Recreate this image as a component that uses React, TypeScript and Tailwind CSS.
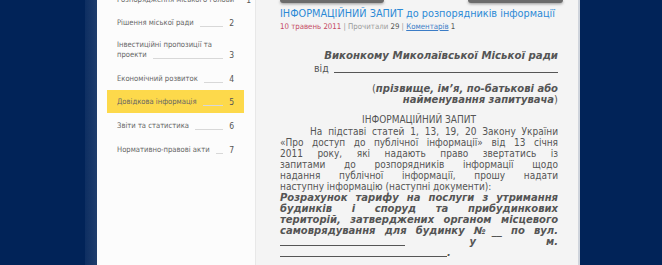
import React from 'react';

const navItems = [
  { label: 'Розпорядження міського голови', num: 1 },
  { label: 'Рішення міської ради', num: 2 },
  { label: 'Інвестиційні пропозиції та проекти', num: 3, two: true },
  { label: 'Економічний розвиток', num: 4 },
  { label: 'Довідкова інформація', num: 5, active: true },
  { label: 'Звіти та статистика', num: 6 },
  { label: 'Нормативно-правові акти', num: 7 },
];

const bodyLines = [
  '«Про доступ до публічної інформації» від 13 січня',
  '2011 року, які надають право звертатись із',
  'запитами до розпорядників інформації щодо',
  'надання публічної інформації, прошу надати',
];

const boldLines = [
  'Розрахунок тарифу на послуги з утримання',
  'будинків і споруд та прибудинкових',
  'територій, затверджених органом місцевого',
  'самоврядування для будинку №__ по вул.',
];

const reg = "font-['DejaVu_Sans_Condensed','Liberation_Sans_Narrow','Liberation_Sans',sans-serif]";
const bi = "font-['DejaVu_Sans',sans-serif] font-bold italic";

export default function App() {
  return (
    <div className="flex h-[265px] w-[662px] overflow-hidden bg-[#012358]">
      <div className="w-[85px] shrink-0" />
      <div className="w-[12px] shrink-0 bg-gradient-to-r from-[#0d2e62] to-[#1f3d6c]" />

      {/* sidebar */}
      <div className="w-[158px] shrink-0 bg-[#fcfcfc] pl-[10px] pr-[11px]">
        <div className="mt-[-12px] flex flex-col">
          {navItems.map((it) => (
            <div
              key={it.num}
              className={`flex px-[10px] text-[7.6px] text-[#666] ${reg} ${
                it.two ? 'h-[33px] pt-[6px] items-start' : 'h-[23px] items-center'
              } ${it.active ? 'bg-[#fdd94b] text-[#5a4a1a]' : ''} ${it.num > 5 ? 'mt-[1px]' : ''}`}
            >
              {it.two ? (
                <div className="flex w-full flex-col leading-[10px]">
                  <span>Інвестиційні пропозиції та</span>
                  <div className="flex items-end">
                    <span>проекти</span>
                    <span className="mx-[6px] mb-[1px] flex-1 border-b border-[#d8d8d8]" />
                    <span className="text-[8.5px] text-[#555]">{it.num}</span>
                  </div>
                </div>
              ) : (
                <div className="flex w-full items-end leading-[10px]">
                  <span className="whitespace-nowrap">{it.label}</span>
                  <span className="mx-[6px] mb-[1px] flex-1 border-b border-[#d8d8d8]" />
                  <span className="text-[8.5px] text-[#555]">{it.num}</span>
                </div>
              )}
            </div>
          ))}
        </div>
      </div>

      {/* content */}
      <div className="relative w-[323px] shrink-0 border-l border-[#e8e8e8] bg-[#f4f4f4] pl-[24px] pr-[20px]">
        <div className="absolute left-[24px] top-0 h-[3px] w-[104px] rounded-b-[3px] bg-[#6b6b6b] shadow-[0_1px_3px_rgba(0,0,0,0.4)]" />
        <div className="absolute left-[212px] top-0 h-[3px] w-[95px] rounded-b-[3px] bg-[#6b6b6b] shadow-[0_1px_3px_rgba(0,0,0,0.4)]" />

        <h1 className={`mt-[6px] whitespace-nowrap text-[10.8px] leading-[16px] text-[#2c8ad6] ${reg}`}>
          ІНФОРМАЦІЙНИЙ ЗАПИТ до розпорядників інформації
        </h1>
        <div className={`mt-0 text-[7.8px] leading-[10px] text-[#999] ${reg}`}>
          <span className="text-[#c44a63]">10 травень 2011</span> | Прочитали{' '}
          <span className="text-[#555]">29</span> |{' '}
          <span className="text-[#3b7cc6] underline">Коментарів</span>{' '}
          <span className="text-[#555]">1</span>
        </div>

        <div className="mt-[17px] text-[#555]">
          <div className={`text-right text-[10.2px] leading-[13px] ${bi}`}>
            Виконкому Миколаївської Міської ради
          </div>
          <div className={`flex items-end pl-[34px] text-[10.5px] leading-[12px] ${reg}`}>
            <span>від</span>
            <span className="mb-[1px] ml-[5px] h-[1px] flex-1 bg-[#555]" />
          </div>
          <div className={`mt-[9px] text-right text-[10px] leading-[11px] ${bi}`}>
            <div>
              <span className="font-normal not-italic">(</span>прізвище, ім’я, по-батькові або
            </div>
            <div>
              найменування запитувача<span className="font-normal not-italic">)</span>
            </div>
          </div>

          <div className={`mt-[9px] text-[10px] leading-[11px] ${reg}`}>
            <div className="text-center">ІНФОРМАЦІЙНИЙ ЗАПИТ</div>
            <div className="mt-[1px] whitespace-nowrap pl-[30px] text-justify [text-align-last:justify]">
              На підставі статей 1, 13, 19, 20 Закону України
            </div>
            {bodyLines.map((l) => (
              <div key={l} className="whitespace-nowrap text-justify [text-align-last:justify]">
                {l}
              </div>
            ))}
            <div>наступну інформацію (наступні документи):</div>
          </div>

          <div className={`text-[10px] leading-[11px] ${bi}`}>
            {boldLines.map((l) => (
              <div key={l} className="whitespace-nowrap text-justify [text-align-last:justify]">
                {l}
              </div>
            ))}
            <div className="flex items-end">
              <span className="mb-[1px] h-[1px] w-[125px] bg-[#555]" />
              <span className="ml-auto mr-[70px]">у</span>
              <span>м.</span>
            </div>
            <div className="flex items-end">
              <span className="mb-[1px] h-[1px] w-[167px] bg-[#555]" />
              <span>.</span>
            </div>
          </div>
        </div>
      </div>
      <div className="w-[2px] shrink-0 bg-[#cfd4dc]" />
    </div>
  );
}
